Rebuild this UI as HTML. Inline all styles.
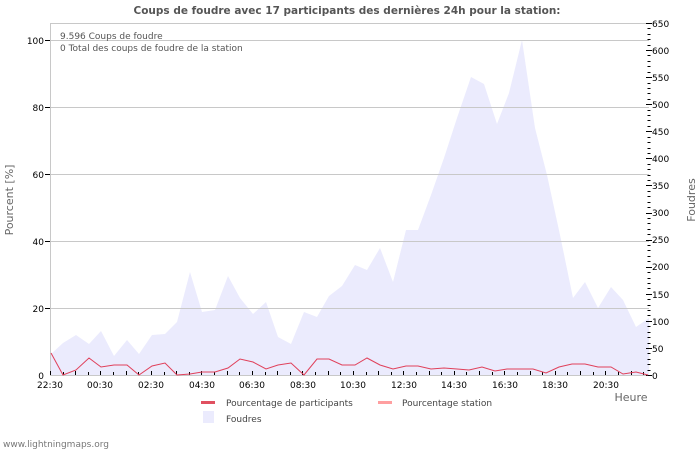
<!DOCTYPE html>
<html><head><meta charset="utf-8"><style>
body{margin:0;background:#fff;width:700px;height:450px;overflow:hidden;font-family:"DejaVu Sans","Liberation Sans",sans-serif}
</style></head><body>
<svg width="700" height="450" xmlns="http://www.w3.org/2000/svg" font-family="DejaVu Sans, Liberation Sans, sans-serif">
<text x="347" y="14" text-anchor="middle" font-size="10.5" font-weight="bold" fill="#555">Coups de foudre avec 17 participants des dernières 24h pour la station:</text>
<polygon fill="#ebebfd" points="51,375 51,354 63,343 76,335 89,344 101,331 114,356 127,340 139,354 152,335 165,334 177,322 190,272 202,312 215,310 228,276 240,298 253,314 266,302 278,337 291,344 304,312 317,317 329,296 342,286 355,265 367,270 380,248 393,282 406,230 418,230 431,195 444,158 457,118 471,77 484,84 497,124 509,93 522,40 535,128 547,175 560,235 573,298 585,282 598,308 611,287 623,300 636,327 649,318 649,375"/>
<g stroke="#c8c8c8" stroke-width="1">
<line x1="50" y1="23.5" x2="649" y2="23.5"/>
<line x1="50" y1="40.5" x2="649" y2="40.5"/>
<line x1="50" y1="107.5" x2="649" y2="107.5"/>
<line x1="50" y1="174.5" x2="649" y2="174.5"/>
<line x1="50" y1="241.5" x2="649" y2="241.5"/>
<line x1="50" y1="308.5" x2="649" y2="308.5"/>
<line x1="50.5" y1="23" x2="50.5" y2="375"/>
<line x1="50" y1="375.5" x2="649" y2="375.5"/>
</g>
<g stroke="#000">
<line x1="45" y1="40.5" x2="50" y2="40.5"/><line x1="45" y1="107.5" x2="50" y2="107.5"/><line x1="45" y1="174.5" x2="50" y2="174.5"/><line x1="45" y1="241.5" x2="50" y2="241.5"/><line x1="45" y1="308.5" x2="50" y2="308.5"/>
</g>
<g font-size="9" fill="#000" text-anchor="end">
<text x="44" y="44">100</text><text x="44" y="111">80</text><text x="44" y="178">60</text><text x="44" y="245">40</text><text x="44" y="312">20</text><text x="44" y="379">0</text>
</g>
<g id="rt" stroke="#000" stroke-width="1"></g>
<g font-size="9" fill="#000">
<text x="652" y="27">650</text><text x="652" y="54">600</text><text x="652" y="81">550</text><text x="652" y="108">500</text><text x="652" y="135">450</text><text x="652" y="162">400</text><text x="652" y="189">350</text><text x="652" y="216">300</text><text x="652" y="243">250</text><text x="652" y="270">200</text><text x="652" y="298">150</text><text x="652" y="325">100</text><text x="652" y="352">50</text><text x="652" y="379">0</text>
</g>
<polyline fill="none" stroke="#e0405a" stroke-width="1" points="51,353 63,375 76,370 89,358 101,367 114,365 127,365 139,375 152,366 165,363 177,375 190,374 202,372 215,372 228,368 240,359 253,362 266,369 278,365 291,363 304,375 317,359 329,359 342,365 355,365 367,358 380,365 393,369 406,366 418,366 431,369 444,368 457,369 469,370 482,367 495,371 507,369 520,369 533,369 546,373 559,367 572,364 585,364 598,367 611,367 623,374 636,372 648,375"/>
<g font-size="9" fill="#000" text-anchor="middle">
<text x="50" y="388">22:30</text><text x="100" y="388">00:30</text><text x="151" y="388">02:30</text><text x="202" y="388">04:30</text><text x="252" y="388">06:30</text><text x="303" y="388">08:30</text><text x="353" y="388">10:30</text><text x="404" y="388">12:30</text><text x="454" y="388">14:30</text><text x="505" y="388">16:30</text><text x="555" y="388">18:30</text><text x="606" y="388">20:30</text>
</g>
<text x="631" y="401" font-size="11" fill="#666" text-anchor="middle">Heure</text>
<text transform="translate(13,200) rotate(-90)" font-size="11" fill="#666" text-anchor="middle">Pourcent   [%]</text>
<text transform="translate(695,200) rotate(-90)" font-size="11" fill="#666" text-anchor="middle">Foudres</text>
<text x="60" y="39" font-size="9" fill="#555">9.596  Coups de foudre</text>
<text x="60" y="51" font-size="9" fill="#555">0 Total des coups de foudre de la station</text>
<rect x="201" y="401" width="14" height="3" fill="#e05060"/>
<text x="226" y="406" font-size="9" fill="#444">Pourcentage de participants</text>
<rect x="378" y="401" width="14" height="3" fill="#ff9fa0"/>
<text x="402" y="406" font-size="9" fill="#444">Pourcentage station</text>
<rect x="203" y="411" width="11" height="12" fill="#ebebfd"/>
<text x="226" y="422" font-size="9" fill="#444">Foudres</text>
<text x="3" y="447" font-size="9" fill="#777">www.lightningmaps.org</text>
</svg>
<script>
var g=document.getElementById('rt'),s='';
for(var v=0;v<=650;v+=10){var y=375-v*352/650;var l=(v%50==0)?6:3;s+='<line x1="'+(649-l/2)+'" y1="'+(Math.round(y)+0.5)+'" x2="'+(649+l/2)+'" y2="'+(Math.round(y)+0.5)+'"/>';}
for(var i=0;i<48;i++){var x=50+i*12.62;var l=(i%2==0)?4:3;s+='<line x1="'+(Math.round(x)+0.5)+'" y1="'+(375-l)+'" x2="'+(Math.round(x)+0.5)+'" y2="375"/>';}
g.innerHTML=s;
</script>
</body></html>
